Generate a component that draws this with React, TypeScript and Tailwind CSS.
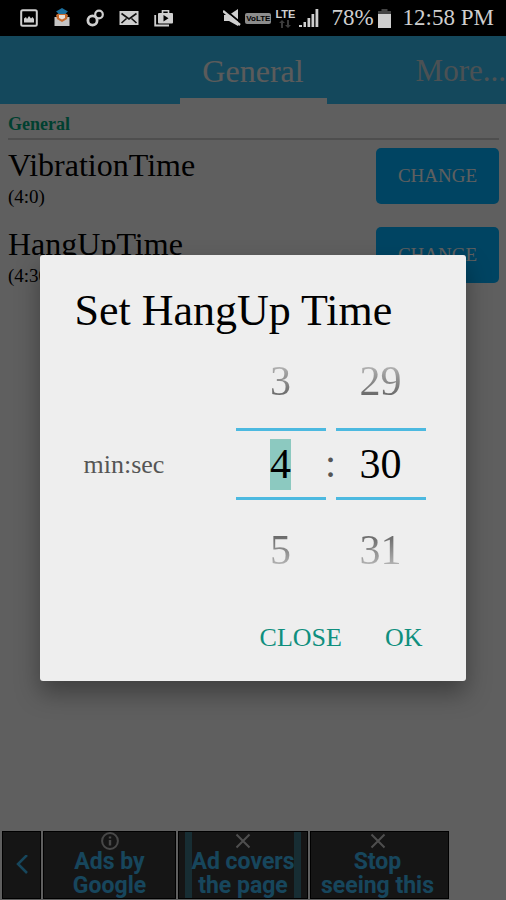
import React, { useState } from 'react';

interface Setting {
  id: string;
  name: string;
  value: string;
}

const settings: Setting[] = [
  { id: 'vibration', name: 'VibrationTime', value: '(4:0)' },
  { id: 'hangup', name: 'HangUpTime', value: '(4:30)' },
];

const StatusBar: React.FC = () => (
  <header className="flex h-9 items-center bg-black pl-5 pr-3 text-[#cfcfcf]">
    <div className="flex items-center gap-[15px]">
      {/* picture */}
      <svg className="h-[18px] w-[18px]" viewBox="0 0 18 18" aria-hidden="true">
        <rect x="1.2" y="1.2" width="15.6" height="15.6" rx="1.5" fill="none" stroke="currentColor" strokeWidth="2" />
        <path d="M4 13.500V9.500l2-1.500 1 2 2-3 2 2.500 1.500-1.500 1.500 2v3.500z" fill="currentColor" />
      </svg>
      {/* mail app */}
      <svg className="h-5 w-[18px]" viewBox="0 0 18 20" aria-hidden="true">
        <path d="M1.500 9h15v9h-15z" fill="#c4c4c4" />
        <path d="M3 7l3-2h6l3 2-1 4-5 3-5-3z" fill="#c86a2c" />
        <path d="M6 7h6v3l-3 1.500L6 10z" fill="#e8e0d8" />
        <path d="M9 0l6 3.500-3 2.500H6L3 3.500z" fill="#1b6f9e" />
      </svg>
      {/* linked rings */}
      <svg className="h-[18px] w-[18px]" viewBox="0 0 18 18" fill="none" stroke="currentColor" aria-hidden="true">
        <circle cx="6.500" cy="11.500" r="4.600" strokeWidth="2.800" />
        <circle cx="13" cy="5.500" r="3.800" strokeWidth="2.200" />
      </svg>
      {/* envelope */}
      <svg className="h-4 w-5" viewBox="0 0 20 16" aria-hidden="true">
        <rect x="0.500" y="1" width="19" height="14" fill="currentColor" />
        <path d="M2.500 3.500L10 9l7.500-5.500M2.500 13l5-4.500M17.500 13l-5-4.500" fill="none" stroke="#111" strokeWidth="1.600" />
      </svg>
      {/* play store */}
      <svg className="h-[18px] w-5" viewBox="0 0 20 18" aria-hidden="true">
        <path d="M1.200 6v10.500H15" fill="none" stroke="currentColor" strokeWidth="1.800" />
        <path d="M8.500 4V1.800h6V4" fill="none" stroke="currentColor" strokeWidth="1.600" />
        <rect x="4" y="4" width="15" height="10.500" rx="1" fill="currentColor" />
        <path d="M9.500 6v6.500l5-3.200z" fill="#000" />
      </svg>
    </div>
    <div className="ml-auto flex items-center">
      {/* muted speaker */}
      <svg className="h-5 w-[18px]" viewBox="0 0 18 20" aria-hidden="true">
        <path d="M1 7h5l9-6v17l-9-5H1z" fill="currentColor" />
        <path d="M1 1l17 14" stroke="#000" strokeWidth="2" />
        <path d="M0 3l17 14" stroke="currentColor" strokeWidth="2.400" />
      </svg>
      <span className="ml-1 rounded-[2px] bg-[#8c8c8c] px-px font-['Liberation_Sans',sans-serif] text-[8px] font-bold leading-[11px] text-black">
        VoLTE
      </span>
      <span className="ml-1 flex flex-col items-center">
        <span className="font-['Liberation_Sans',sans-serif] text-[11px] font-bold leading-[11px]">LTE</span>
        <svg className="h-2 w-3" viewBox="0 0 12 8" fill="#3c3c3c" aria-hidden="true">
          <path d="M3 0l3 3H4v5H2V3H0zM9 8l3-3h-2V0H8v5H6z" />
        </svg>
      </span>
      {/* signal */}
      <svg className="ml-1 h-[18px] w-5" viewBox="0 0 20 18" fill="currentColor" aria-hidden="true">
        <path d="M0 16h3v2H0zM4.500 13h2.500v5H4.500zM8.500 9h2.700v9H8.500zM12.500 5h2.700v13h-2.700zM16.500 0h2.800v18h-2.800z" />
      </svg>
      <span className="ml-3 text-[23px] leading-9">78%</span>
      <svg className="ml-1 h-[19px] w-[13px]" viewBox="0 0 13 19" aria-hidden="true">
        <path d="M3.500 0h6v2H13v4H0V2h3.500z" fill="#444" />
        <path d="M0 5h13v14H0z" fill="currentColor" />
      </svg>
      <span className="ml-3 text-[23px] leading-9">12:58 PM</span>
    </div>
  </header>
);

const TabBar: React.FC = () => (
  <nav className="flex h-[68px] overflow-hidden bg-[#33b5e5] text-[32px]">
    <div className="flex-1" />
    <button type="button" className="w-[147px] border-b-[6px] border-[#eeeeee] pt-2 text-[#e4e4e4]">
      General
    </button>
    <div className="flex min-w-0 flex-1 justify-end">
      <button type="button" className="whitespace-nowrap pt-0.5 text-[31px] text-[#bccbd2]">
        More...
      </button>
    </div>
  </nav>
);

const SettingRow: React.FC<{ setting: Setting }> = ({ setting }) => (
  <li className="flex items-start justify-between">
    <div>
      <div className="text-[32px] leading-[34px]">{setting.name}</div>
      <div className="text-[19px] leading-[30px]">{setting.value}</div>
    </div>
    <button type="button" className="h-14 w-[123px] rounded-[5px] bg-[#00aaf5] text-[19px] text-[#eeeeee]">
      CHANGE
    </button>
  </li>
);

const adCell =
  "flex flex-col items-center border border-black bg-[#353535] text-center font-['Roboto',sans-serif] text-[23px] font-bold leading-6 text-[#3ab0e6]";

const CloseMark: React.FC = () => (
  <svg className="h-[18px] w-[18px] shrink-0" viewBox="0 0 18 18" stroke="#c4c4c4" strokeWidth="2" aria-hidden="true">
    <path d="M2.500 2.500l13 13M15.500 2.500l-13 13" />
  </svg>
);

const AdBar: React.FC = () => (
  <div className="mt-auto flex h-[69px] w-[449px] max-w-full gap-0.5 pb-px pl-0.5">
    <button type="button" aria-label="Back" className={`${adCell} w-[39px] justify-center`}>
      <svg className="h-5 w-4" viewBox="0 0 16 20" fill="none" stroke="currentColor" strokeWidth="2.500" aria-hidden="true">
        <path d="M13 0L4 9l9 9" />
      </svg>
    </button>
    <button type="button" className={`${adCell} flex-1`}>
      <svg className="h-[18px] w-[18px] shrink-0" viewBox="0 0 18 18" fill="none" stroke="#b4b4b4" strokeWidth="2" aria-hidden="true">
        <circle cx="9" cy="9" r="7.900" />
        <path d="M9 8v5.500M9 4.500v2" strokeWidth="2.400" />
      </svg>
      <span>Ads by</span>
      <span>Google</span>
    </button>
    <button type="button" className={`${adCell} w-[130px]`}>
      <span className="flex w-[116px] flex-1 flex-col items-center border-x-[7px] border-[#3a7080]">
        <CloseMark />
        <span className="whitespace-nowrap">Ad covers</span>
        <span>the page</span>
      </span>
    </button>
    <button type="button" className={`${adCell} w-[139px] pr-1`}>
      <CloseMark />
      <span>Stop</span>
      <span className="whitespace-nowrap">seeing this</span>
    </button>
  </div>
);

interface NumberPickerProps {
  label: string;
  value: number;
  onChange: (value: number) => void;
  selected?: boolean;
}

const NumberPicker: React.FC<NumberPickerProps> = ({ label, value, onChange, selected = false }) => (
  <div className="flex w-[90px] flex-col text-[42px] leading-[51px]">
    <button type="button" className="h-[93px]" onClick={() => onChange(value - 1)}>
      <span className="bg-linear-to-b from-[#c8c8c8] to-[#555555] bg-clip-text text-transparent">{value - 1}</span>
    </button>
    <div className="flex h-[72px] items-center justify-center border-y-[3px] border-[#4cb9e0]">
      <input
        type="text"
        aria-label={label}
        className={`h-[51px] text-center text-black outline-none ${selected ? 'w-[21px] bg-[#8cc9c0]' : 'w-[42px]'}`}
        value={value}
        onChange={(e) => onChange(Number(e.target.value) || 0)}
      />
    </div>
    <button type="button" className="h-[93px] pt-2" onClick={() => onChange(value + 1)}>
      <span className="bg-linear-to-b from-[#555555] to-[#c8c8c8] bg-clip-text text-transparent">{value + 1}</span>
    </button>
  </div>
);

const TimeDialog: React.FC = () => {
  const [minutes, setMinutes] = useState(4);
  const [seconds, setSeconds] = useState(30);

  return (
    <div
      role="dialog"
      aria-labelledby="dialog-title"
      className="w-[84%] rounded-[3px] bg-[#eeeeee] pb-5 pt-8 shadow-[0_12px_24px_rgba(0,0,0,0.35)]"
    >
      <h2 id="dialog-title" className="whitespace-nowrap pl-[34px] text-[44px] leading-[48px] text-black">
        Set HangUp Time
      </h2>
      <div className="flex items-center pl-[43px] pr-10">
        <span className="flex-1 text-[26px] text-[#555555]">min:sec</span>
        <NumberPicker label="Minutes" value={minutes} onChange={setMinutes} selected />
        <span className="flex w-2.5 justify-center text-[40px] text-[#555555]">:</span>
        <NumberPicker label="Seconds" value={seconds} onChange={setSeconds} />
      </div>
      <div className="mt-5 flex justify-end gap-[27px] pr-[35px] text-[26px] text-[#0f8f7e]">
        <button type="button" className="h-12 px-2">CLOSE</button>
        <button type="button" className="h-12 px-2">OK</button>
      </div>
    </div>
  );
};

const App: React.FC = () => {
  return (
    <div className="flex min-h-screen flex-col bg-[#eeeeee] font-['Liberation_Serif',serif]">
      <StatusBar />
      <main className="relative flex flex-1 flex-col overflow-hidden">
        <TabBar />
        <section className="pl-2 pr-[7px]">
          <h1 className="border-b-2 border-[#c4c4c4] pt-1.5 text-[18px] font-bold leading-7 text-[#00a078]">
            General
          </h1>
          <ul className="flex flex-col gap-[15px] pt-2 text-black">
            {settings.map((setting) => (
              <SettingRow key={setting.id} setting={setting} />
            ))}
          </ul>
        </section>
        <AdBar />
        {/* dimmed backdrop with the dialog */}
        <div className="absolute inset-0 flex items-center justify-center bg-black/60">
          <TimeDialog />
        </div>
      </main>
    </div>
  );
};

export default App;
